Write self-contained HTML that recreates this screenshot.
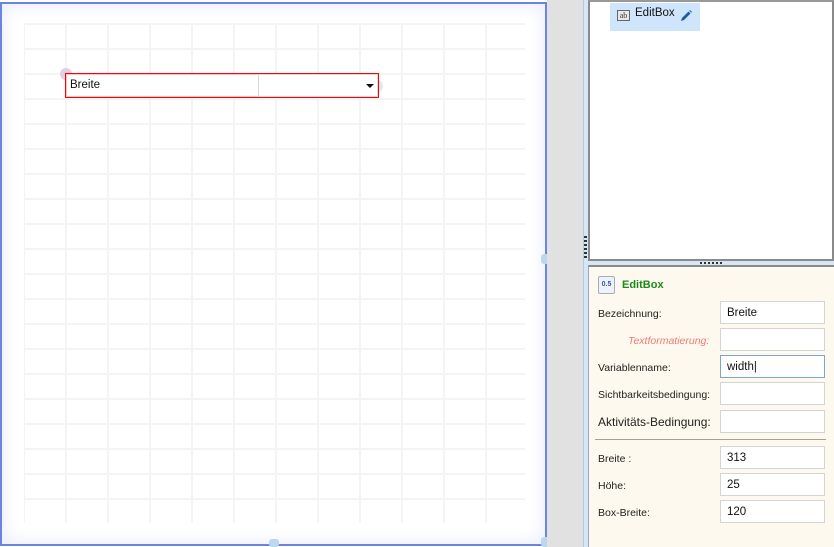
<!DOCTYPE html>
<html><head><meta charset="utf-8"><style>
*{margin:0;padding:0;box-sizing:border-box}
body{width:834px;height:547px;position:relative;overflow:hidden;background:#fff;font-family:"Segoe UI","Liberation Sans","DejaVu Sans",sans-serif;font-size:11px;color:#222}
.abs{position:absolute}
#canvas{left:0;top:2px;width:547px;height:544px;border:2px solid #6b84e0;background:#fff;box-shadow:inset 0 0 18px #e6e8f8}
#grid{left:24px;top:23px;width:501px;height:500px;
background-image:linear-gradient(to right,#f4f4f4 2px,transparent 2px),linear-gradient(to bottom,#f4f4f4 2px,transparent 2px);
background-size:42px 25px;background-position:-1px 0px}
#gray{left:547px;top:0;width:36px;height:547px;background:#e1e1e1}
#strip{left:583px;top:0;width:5px;height:547px;background:#d6e6f6;border-left:1px solid #b8c8d8}
#top{left:588px;top:0;width:246px;height:261px;background:#fff;border:2px solid #8a8a8a;border-top-color:#999}
#hstrip{left:588px;top:261px;width:246px;height:4px;background:#d6e6f6}
#bot{left:588px;top:265px;width:246px;height:282px;background:#fdf9ee;border-top:2px solid #8a8a8a;border-left:1px solid #9ab}
.lbl{position:absolute;left:9px;font-size:10.5px}
.inp{position:absolute;left:131px;width:105px;height:23px;background:#fff;border:1px solid #d4d4d4;padding:1px 6px 0;line-height:21px;font-size:11.5px;color:#111}
</style></head><body>
<div id="canvas" class="abs"></div>
<div id="grid" class="abs"></div>
<div class="abs" style="left:60px;top:68px;width:12px;height:12px;border-radius:50%;background:#e2cfe4"></div>
<div class="abs" style="left:373px;top:80px;width:10px;height:12px;border-radius:50%;background:#dde8f2"></div>
<div class="abs" style="left:65px;top:73px;width:314px;height:25px;background:#fff;box-shadow:inset 0 0 0 1px #ff0000, inset 0 0 0 2px rgba(255,80,80,0.35)"></div>
<div class="abs" style="left:70px;top:79px;font-size:11.5px;color:#111">Breite</div>
<div class="abs" style="left:258px;top:74px;width:120px;height:23px;border:1px solid #dadade;background:#fff"></div>
<div class="abs" style="left:366px;top:84px;width:0;height:0;border-left:4px solid transparent;border-right:4px solid transparent;border-top:4px solid #111"></div>
<div class="abs" style="left:541px;top:254px;width:10px;height:10px;border-radius:3px;background:#bcd8ef"></div>
<div class="abs" style="left:269px;top:539px;width:10px;height:8px;border-radius:3px;background:#bcd8ef"></div>
<div class="abs" style="left:541px;top:537px;width:10px;height:10px;border-radius:3px;background:#bcd8ef"></div>
<div id="gray" class="abs"></div>
<div id="strip" class="abs"></div>
<div class="abs" style="left:584px;top:236px;width:3px;height:22px;background:repeating-linear-gradient(to bottom,#333 0 2px,transparent 2px 4px)"></div>
<div id="top" class="abs"></div>
<div class="abs" style="left:610px;top:3px;width:90px;height:28px;background:#cfe5fb"></div>
<div class="abs" style="left:617px;top:10px;width:13px;height:11px;border:1px solid #666;background:#e8e8e8;font-size:8px;line-height:9px;text-align:center;color:#333;font-family:'Liberation Serif',serif">ab</div>
<div class="abs" style="left:635px;top:7px;font-size:11.5px;color:#111">EditBox</div>
<svg class="abs" style="left:679px;top:9px" width="14" height="14" viewBox="0 0 14 14"><path d="M2 12 L3 9 L9.5 2.5 L11.5 4.5 L5 11 Z" fill="#1d5aa8"/><path d="M10.3 1.7 L11 1 L13 3 L12.3 3.7Z" fill="#1d5aa8"/></svg>
<div id="hstrip" class="abs"></div>
<div class="abs" style="left:700px;top:262px;width:22px;height:2px;background:repeating-linear-gradient(to right,#333 0 2px,transparent 2px 4px)"></div>
<div id="bot" class="abs">
<div class="abs" style="left:9px;top:9px;width:17px;height:18px;border:1px solid #aab;background:#eef2fa;border-radius:2px;font-size:7px;font-weight:bold;color:#3355aa;text-align:center;line-height:16px">0.5</div>
<div class="abs" style="left:33px;top:12px;font-size:11px;font-weight:bold;color:#1a8a1a">EditBox</div>
<div class="lbl" style="top:41px">Bezeichnung:</div><div class="inp" style="top:34px">Breite</div>
<div class="lbl" style="top:68px;left:39px;color:#ef7a7a;font-style:italic">Textformatierung:</div><div class="inp" style="top:61px"></div>
<div class="lbl" style="top:95px">Variablenname:</div><div class="inp" style="top:88px;border-color:#7aa6d6">width|</div>
<div class="lbl" style="top:122px">Sichtbarkeitsbedingung:</div><div class="inp" style="top:115px"></div>
<div class="lbl" style="top:148px;font-size:12px">Aktivitäts-Bedingung:</div><div class="inp" style="top:143px"></div>
<div class="abs" style="left:6px;top:172px;width:231px;height:1px;background:#a59f95"></div>
<div class="lbl" style="top:186px">Breite :</div><div class="inp" style="top:179px">313</div>
<div class="lbl" style="top:213px">Höhe:</div><div class="inp" style="top:206px">25</div>
<div class="lbl" style="top:240px">Box-Breite:</div><div class="inp" style="top:233px">120</div>
</div>
</body></html>
